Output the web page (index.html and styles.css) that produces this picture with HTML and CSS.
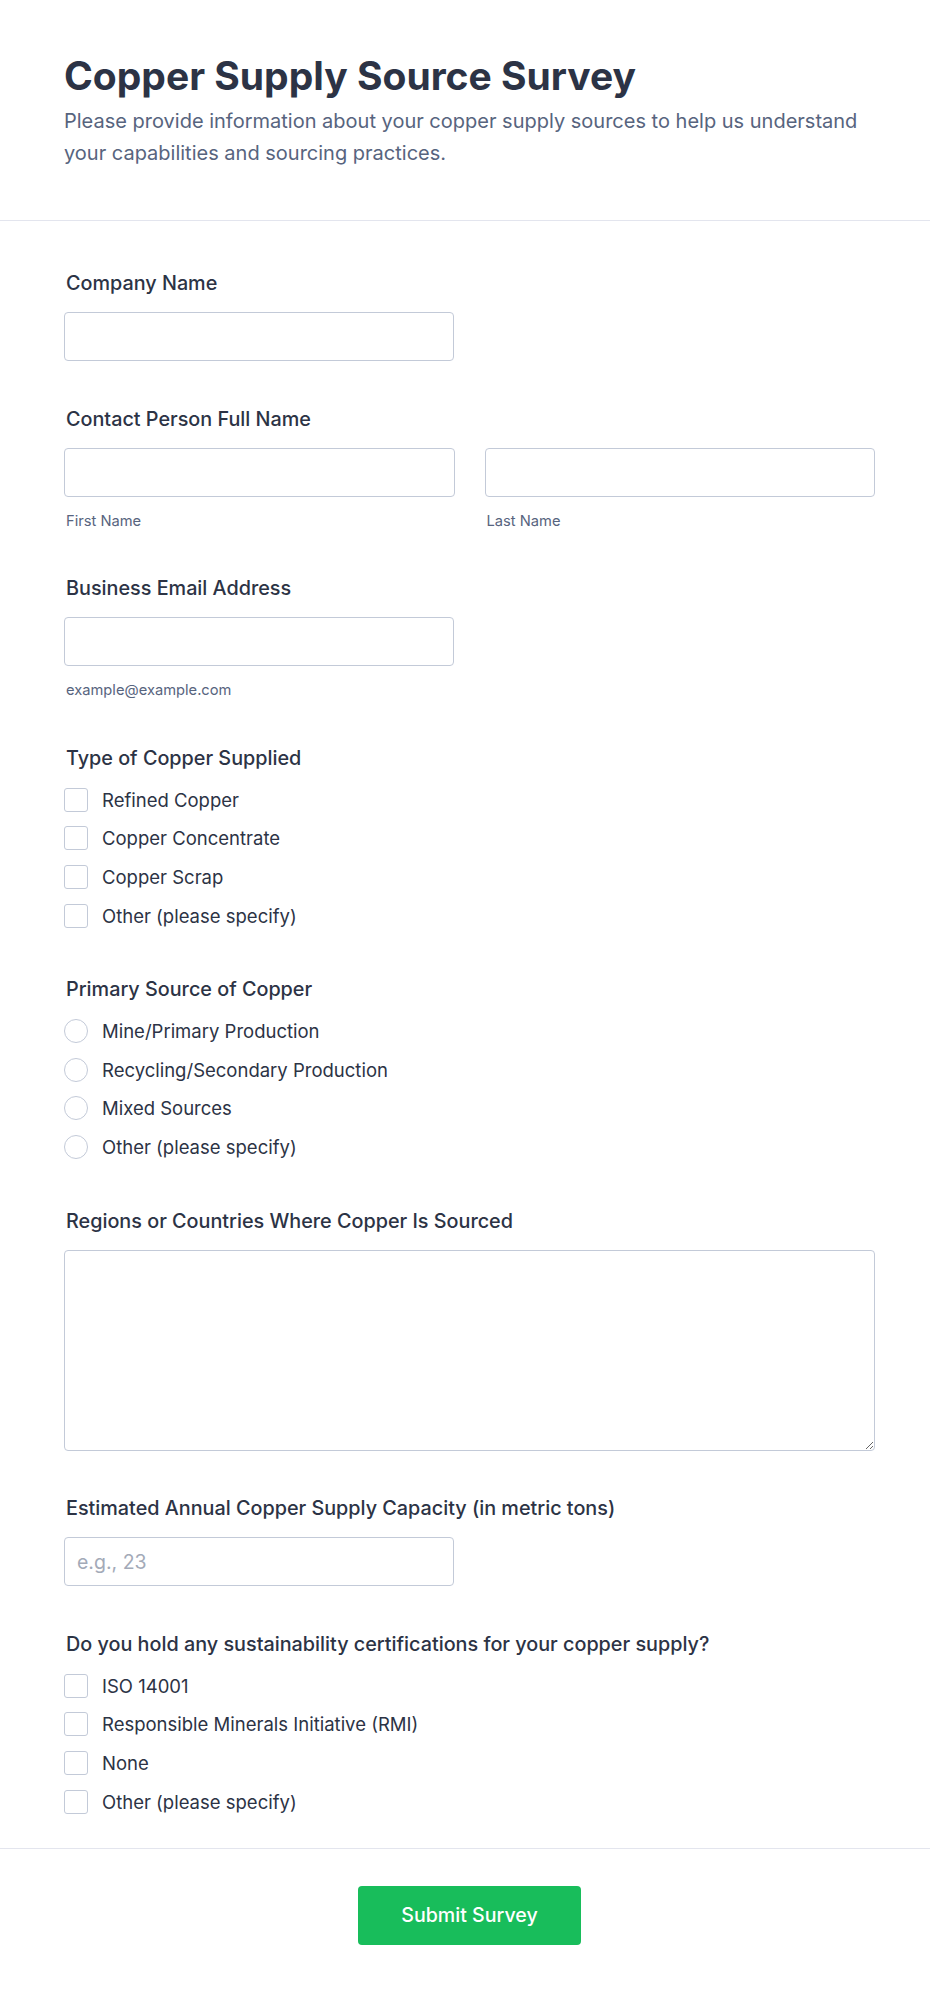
FILE: index.html
```html
<!DOCTYPE html>
<html lang="en">
<head>
<meta charset="utf-8">
<title>Copper Supply Source Survey</title>
<link rel="stylesheet" href="styles.css">
</head>
<body>
<header class="header">
  <h1 class="title">Copper Supply Source Survey</h1>
  <p class="subtitle">Please provide information about your copper supply sources to help us understand your capabilities and sourcing practices.</p>
</header>
<form class="form">
  <div class="field">
    <label class="field-label">Company Name</label>
    <input class="input input-half" type="text">
  </div>
  <div class="field">
    <label class="field-label">Contact Person Full Name</label>
    <div class="name-grid">
      <div>
        <input class="input" type="text">
        <div class="sublabel">First Name</div>
      </div>
      <div>
        <input class="input" type="text">
        <div class="sublabel">Last Name</div>
      </div>
    </div>
  </div>
  <div class="field">
    <label class="field-label">Business Email Address</label>
    <input class="input input-half" type="email">
    <div class="sublabel">example@example.com</div>
  </div>
  <div class="field">
    <div class="field-label">Type of Copper Supplied</div>
    <div class="options">
      <label class="option"><span class="box"></span>Refined Copper</label>
      <label class="option"><span class="box"></span>Copper Concentrate</label>
      <label class="option"><span class="box"></span>Copper Scrap</label>
      <label class="option"><span class="box"></span>Other (please specify)</label>
    </div>
  </div>
  <div class="field">
    <div class="field-label">Primary Source of Copper</div>
    <div class="options">
      <label class="option"><span class="box round"></span>Mine/Primary Production</label>
      <label class="option"><span class="box round"></span>Recycling/Secondary Production</label>
      <label class="option"><span class="box round"></span>Mixed Sources</label>
      <label class="option"><span class="box round"></span>Other (please specify)</label>
    </div>
  </div>
  <div class="field">
    <label class="field-label">Regions or Countries Where Copper Is Sourced</label>
    <textarea class="input textarea"></textarea>
  </div>
  <div class="field">
    <label class="field-label">Estimated Annual Copper Supply Capacity (in metric tons)</label>
    <input class="input input-half" type="text" placeholder="e.g., 23">
  </div>
  <div class="field field-last">
    <div class="field-label">Do you hold any sustainability certifications for your copper supply?</div>
    <div class="options">
      <label class="option"><span class="box"></span>ISO 14001</label>
      <label class="option"><span class="box"></span>Responsible Minerals Initiative (RMI)</label>
      <label class="option"><span class="box"></span>None</label>
      <label class="option"><span class="box"></span>Other (please specify)</label>
    </div>
  </div>
</form>
<footer class="footer">
  <button class="submit" type="button">Submit Survey</button>
</footer>
</body>
</html>
```
FILE: styles.css
```css
* { box-sizing: border-box; }
html, body {
  margin: 0;
  padding: 0;
  background: #ffffff;
}
body {
  font-family: Inter, "Noto Sans", sans-serif;
  color: #2c3345;
}
.header {
  padding: 52.5px 55px 51px 64px;
  border-bottom: 1px solid #e3e5ee;
}
.title {
  margin: 0;
  font-size: 39px;
  line-height: 46px;
  font-weight: 700;
  color: #2c3345;
}
.subtitle {
  margin: 6.5px 0 0;
  font-size: 20px;
  line-height: 32px;
  color: #57647e;
}
.form {
  padding: 49px 55px 30px 64px;
}
.field {
  margin-bottom: 44.6px;
}
.field-sub {
  margin-bottom: 43px;
}
.field-last {
  margin-bottom: 0;
}
.field-label {
  display: block;
  padding-left: 2px;
  font-size: 19.8px;
  line-height: 27px;
  font-weight: 500;
  color: #2c3345;
  margin-bottom: 15px;
}
.input {
  display: block;
  width: 100%;
  height: 49px;
  border: 1px solid #c3cad8;
  border-radius: 4px;
  background: #fff;
  font-family: Inter, sans-serif;
  font-size: 19.5px;
  padding: 0 12px;
  color: #2c3345;
}
.input::placeholder {
  color: #a3aab8;
}
.input-half {
  width: 390px;
}
.textarea {
  height: 201px;
  resize: vertical;
}
.name-grid {
  display: grid;
  grid-template-columns: 1fr 1fr;
  gap: 30px;
}
.sublabel {
  margin-top: 14px;
  padding-left: 2px;
  font-size: 14.7px;
  line-height: 20px;
  color: #57647e;
}
.options {
  display: flex;
  flex-direction: column;
  gap: 14.6px;
  margin-top: 16px;
  padding-bottom: 4px;
}
.option {
  display: flex;
  align-items: center;
  gap: 14px;
  height: 24px;
  font-size: 18.5px;
  color: #2c3345;
}
.box {
  flex: none;
  width: 24px;
  height: 24px;
  border: 1px solid #c3cad8;
  border-radius: 3px;
  background: #fff;
}
.box.round {
  border-radius: 50%;
}
.footer {
  border-top: 1px solid #e3e5ee;
  padding: 37px 55px 50px 64px;
  display: flex;
  justify-content: center;
}
.submit {
  width: 223px;
  height: 59px;
  border: none;
  border-radius: 4px;
  background: #18bd5b;
  color: #ffffff;
  font-family: Inter, sans-serif;
  font-size: 19.6px;
  font-weight: 500;
}
```
